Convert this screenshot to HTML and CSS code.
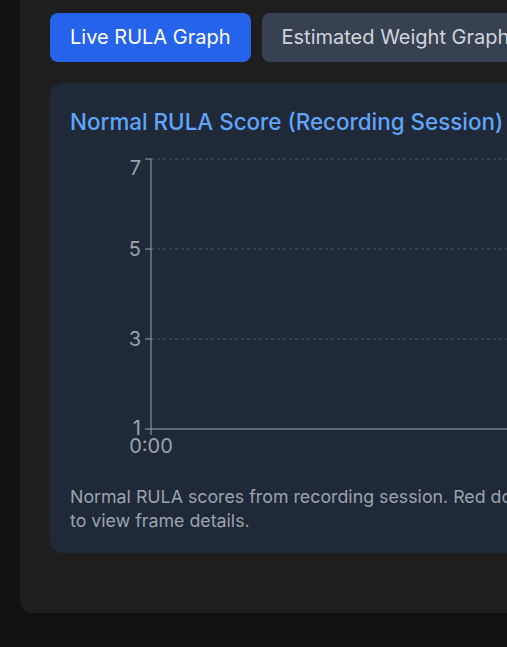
FILE: index.html
```html
<!DOCTYPE html>
<html lang="en">
<head>
<meta charset="utf-8">
<link rel="stylesheet" href="styles.css">
</head>
<body>
<div class="panel">
  <div class="tabs">
    <button class="tab active">Live RULA Graph</button>
    <button class="tab">Estimated Weight Graph</button>
  </div>
  <section class="card">
    <h2 class="title">Normal RULA Score (Recording Session)</h2>
    <svg class="chart" width="860" height="320" viewBox="0 0 860 320">
      <g class="grid">
        <line x1="81" y1="14" x2="860" y2="14"/>
        <line x1="81" y1="104" x2="860" y2="104"/>
        <line x1="81" y1="194" x2="860" y2="194"/>
      </g>
      <g class="axis">
        <line x1="81" y1="14" x2="81" y2="290"/>
        <line x1="81" y1="284" x2="860" y2="284"/>
        <line x1="75" y1="14" x2="81" y2="14"/>
        <line x1="75" y1="104" x2="81" y2="104"/>
        <line x1="75" y1="194" x2="81" y2="194"/>
        <line x1="75" y1="284" x2="81" y2="284"/>
      </g>
      <g class="labels">
        <text x="71" y="23" text-anchor="end" dominant-baseline="central">7</text>
        <text x="71" y="104" text-anchor="end" dominant-baseline="central">5</text>
        <text x="71" y="194" text-anchor="end" dominant-baseline="central">3</text>
        <text x="71" y="283" text-anchor="end" dominant-baseline="central">1</text>
        <text x="81" y="301" text-anchor="middle" dominant-baseline="central">0:00</text>
      </g>
    </svg>
    <p class="caption">Normal RULA scores from recording session. Red dots mark high-risk frames. Click a dot<br>to view frame details.</p>
  </section>
</div>
</body>
</html>
```
FILE: styles.css
```css
html, body {
  margin: 0;
  padding: 0;
  background: #111114;
  overflow: hidden;
}
body {
  font-family: Inter, "Noto Sans", sans-serif;
  width: 507px;
  height: 647px;
}
.panel {
  width: 1100px;
  margin-left: 20px;
  background: #1e1e1f;
  border-radius: 0 0 12px 12px;
  padding: 13px 30px 60px;
}
.tabs {
  display: flex;
  gap: 11px;
}
.tab {
  font-family: inherit;
  font-size: 20px;
  line-height: 29px;
  padding: 10px 20px;
  border: none;
  border-radius: 8px;
  background: #374151;
  color: #d1d5db;
  white-space: nowrap;
}
.tab.active {
  background: #2563eb;
  color: #ffffff;
}
.card {
  margin-top: 21px;
  width: 1000px;
  background: #1f2937;
  border-radius: 12px;
  padding: 24px 20px 20px;
}
.title {
  margin: 0;
  font-size: 22.4px;
  line-height: 30px;
  font-weight: 500;
  color: #60a5fa;
}
.chart {
  display: block;
  margin-top: 8px;
}
.grid line {
  stroke: #4b5563;
  stroke-width: 1;
  stroke-dasharray: 3 3;
}
.axis line {
  stroke: #9ca3af;
  stroke-width: 1;
}
.labels text {
  fill: #9ca3af;
  font-size: 20px;
  font-family: Inter, "Noto Sans", sans-serif;
}
.caption {
  margin: 20px 0 0;
  font-size: 17.8px;
  line-height: 24px;
  color: #9ca3af;
}
```
